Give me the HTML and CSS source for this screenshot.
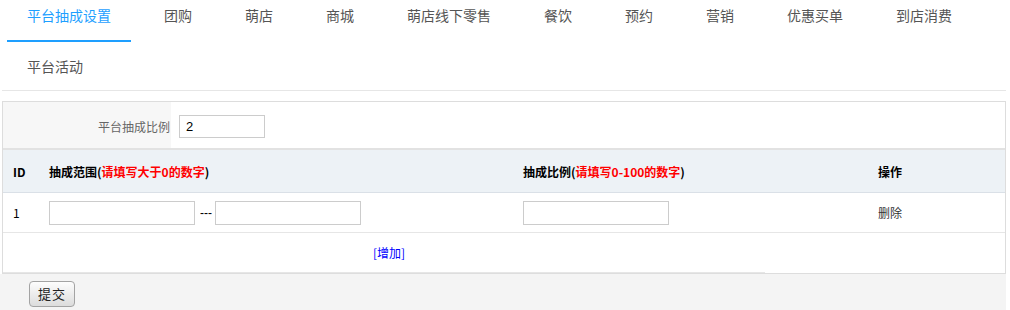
FILE: index.html
```html
<!DOCTYPE html>
<html lang="zh-CN">
<head>
<meta charset="utf-8">
<title>平台抽成设置</title>
<link rel="stylesheet" href="styles.css">
</head>
<body>
<div class="page">
  <ul class="tabs">
    <li class="tab active">平台抽成设置</li>
    <li class="tab">团购</li>
    <li class="tab">萌店</li>
    <li class="tab">商城</li>
    <li class="tab">萌店线下零售</li>
    <li class="tab">餐饮</li>
    <li class="tab">预约</li>
    <li class="tab">营销</li>
    <li class="tab">优惠买单</li>
    <li class="tab">到店消费</li>
    <li class="tab">平台活动</li>
  </ul>

  <div class="panel">
    <div class="ratio-row">
      <div class="ratio-label">平台抽成比例</div>
      <input class="input input-ratio" type="text" value="2">
    </div>

    <div class="row head">
      <div class="cell">ID</div>
      <div class="cell">抽成范围(<span class="red">请填写大于0的数字</span>)</div>
      <div class="cell">抽成比例(<span class="red">请填写0-100的数字</span>)</div>
      <div class="cell">操作</div>
    </div>

    <div class="row data">
      <div class="cell">1</div>
      <div class="cell range">
        <input class="input input-wide" type="text">
        <span class="dash">---</span>
        <input class="input input-wide" type="text">
      </div>
      <div class="cell"><input class="input input-wide" type="text"></div>
      <div class="cell"><a class="del">删除</a></div>
    </div>

    <div class="add-row">
      <div class="add-cell"><a class="add">[增加]</a></div>
    </div>
  </div>

  <div class="footer">
    <button class="btn" type="button">提交</button>
  </div>
</div>
</body>
</html>
```

FILE: styles.css
```css
* {
  box-sizing: border-box;
}

html, body {
  margin: 0;
  padding: 0;
  background: #fff;
}

body {
  font-family: "Noto Sans CJK SC", "Microsoft YaHei", sans-serif;
  color: #333;
}

.page {
  width: 1006px;
}

/* Tabs */
.tabs {
  list-style: none;
  margin: 0 0 0 2px;
  padding: 0 0 0 5px;
  width: 1004px;
  height: 91px;
  border-bottom: 1px solid #e6e6e6;
  display: flex;
  flex-wrap: wrap;
  align-content: flex-start;
  column-gap: 13px;
  row-gap: 9px;
}

.tab {
  padding: 0 20px 10px;
  line-height: 30px;
  font-size: 14px;
  color: #555;
  white-space: nowrap;
  border-bottom: 2px solid transparent;
}

.tab.active {
  color: #1e9fff;
  border-bottom-color: #1e9fff;
}

/* Panel */
.panel {
  margin: 10px 0 0 2px;
  width: 1004px;
  border: 1px solid #dddddd;
}

.ratio-row {
  display: flex;
  align-items: center;
  height: 48px;
  border-bottom: 2px solid #e2e2e2;
}

.ratio-label {
  align-self: stretch;
  width: 168px;
  background: #f7f7f7;
  display: flex;
  align-items: center;
  justify-content: flex-end;
  padding: 2px 1px 0 0;
  font-size: 12px;
  color: #666;
}

.input {
  border: 1px solid #cccccc;
  background: #fff;
  font-family: inherit;
  outline: none;
}

.input-ratio {
  margin: 3px 0 0 8px;
  width: 86px;
  height: 23px;
  padding: 0 6px;
  font-family: "Liberation Sans", Arial, sans-serif;
  font-size: 13px;
  color: #000;
}

.input-wide {
  width: 146px;
  height: 24px;
  padding: 0 6px;
  font-size: 12px;
}

.row {
  display: grid;
  grid-template-columns: 36px 474px 355px 1fr;
  align-items: center;
}

.cell {
  padding-left: 10px;
  font-size: 12px;
  white-space: nowrap;
}

.head {
  height: 43px;
  background: #edf2f6;
  border-bottom: 1px solid #dae0e7;
}

.head .cell {
  font-weight: bold;
  color: #000;
}

.red {
  color: #ff0000;
}

.data {
  height: 40px;
  border-bottom: 1px solid #e6e6e6;
}

.data .cell {
  color: #000;
  font-size: 12px;
}

.range {
  display: flex;
  align-items: center;
}

.dash {
  margin: 0 3px 0 5px;
  width: 12px;
  font-family: "Liberation Sans", Arial, sans-serif;
  font-size: 12px;
  letter-spacing: 0;
  color: #000;
  line-height: 1;
  overflow: hidden;
}

.del {
  color: #333;
  font-size: 12px;
}

.add-row {
  height: 40px;
}

.add-cell {
  width: 762px;
  height: 40px;
  border-bottom: 1px solid #e6e6e6;
  padding-left: 10px;
  display: flex;
  align-items: center;
  justify-content: center;
}

.add {
  color: #0000ff;
  font-size: 12px;
}

/* Footer */
.footer {
  background: #f4f4f4;
  height: 40px;
  padding: 6px 0 0 29px;
}

.btn {
  width: 46px;
  height: 26px;
  padding: 0;
  border: 1px solid #a3a3a3;
  border-radius: 4px;
  background: linear-gradient(#fdfdfd, #dcdcdc);
  font-family: inherit;
  font-size: 13px;
  letter-spacing: 1px;
  color: #222;
}
```
